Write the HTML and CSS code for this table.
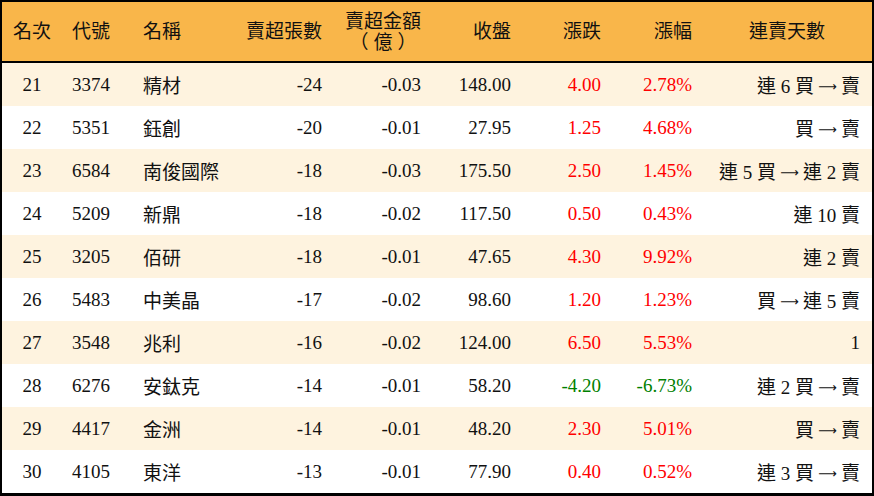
FILE: index.html
```html
<!DOCTYPE html>
<html lang="zh-Hant">
<head>
<meta charset="utf-8">
<title>賣超排行</title>
<link rel="stylesheet" href="styles.css">
</head>
<body>
<table class="rank">
  <colgroup>
    <col class="w1"><col class="w2"><col class="w3"><col class="w4"><col class="w5"><col class="w6"><col class="w7"><col class="w8"><col class="w9">
  </colgroup>
  <thead>
    <tr>
      <th class="c1">名次</th>
      <th class="c2">代號</th>
      <th class="c3">名稱</th>
      <th class="num">賣超張數</th>
      <th class="num"><span class="stack">賣超金額<br><span class="unit">（億）</span></span></th>
      <th class="num">收盤</th>
      <th class="num">漲跌</th>
      <th class="num">漲幅</th>
      <th class="c9h">連賣天數</th>
    </tr>
  </thead>
  <tbody>
    <tr class="alt"><td class="c1">21</td><td class="c2">3374</td><td class="c3">精材</td><td class="num">-24</td><td class="num">-0.03</td><td class="num">148.00</td><td class="num up">4.00</td><td class="num up">2.78%</td><td class="c9">連 6 買<span class="arrow">⟶</span>賣</td></tr>
    <tr><td class="c1">22</td><td class="c2">5351</td><td class="c3">鈺創</td><td class="num">-20</td><td class="num">-0.01</td><td class="num">27.95</td><td class="num up">1.25</td><td class="num up">4.68%</td><td class="c9">買<span class="arrow">⟶</span>賣</td></tr>
    <tr class="alt"><td class="c1">23</td><td class="c2">6584</td><td class="c3">南俊國際</td><td class="num">-18</td><td class="num">-0.03</td><td class="num">175.50</td><td class="num up">2.50</td><td class="num up">1.45%</td><td class="c9">連 5 買<span class="arrow">⟶</span>連 2 賣</td></tr>
    <tr><td class="c1">24</td><td class="c2">5209</td><td class="c3">新鼎</td><td class="num">-18</td><td class="num">-0.02</td><td class="num">117.50</td><td class="num up">0.50</td><td class="num up">0.43%</td><td class="c9">連 10 賣</td></tr>
    <tr class="alt"><td class="c1">25</td><td class="c2">3205</td><td class="c3">佰研</td><td class="num">-18</td><td class="num">-0.01</td><td class="num">47.65</td><td class="num up">4.30</td><td class="num up">9.92%</td><td class="c9">連 2 賣</td></tr>
    <tr><td class="c1">26</td><td class="c2">5483</td><td class="c3">中美晶</td><td class="num">-17</td><td class="num">-0.02</td><td class="num">98.60</td><td class="num up">1.20</td><td class="num up">1.23%</td><td class="c9">買<span class="arrow">⟶</span>連 5 賣</td></tr>
    <tr class="alt"><td class="c1">27</td><td class="c2">3548</td><td class="c3">兆利</td><td class="num">-16</td><td class="num">-0.02</td><td class="num">124.00</td><td class="num up">6.50</td><td class="num up">5.53%</td><td class="c9">1</td></tr>
    <tr><td class="c1">28</td><td class="c2">6276</td><td class="c3">安鈦克</td><td class="num">-14</td><td class="num">-0.01</td><td class="num">58.20</td><td class="num down">-4.20</td><td class="num down">-6.73%</td><td class="c9">連 2 買<span class="arrow">⟶</span>賣</td></tr>
    <tr class="alt"><td class="c1">29</td><td class="c2">4417</td><td class="c3">金洲</td><td class="num">-14</td><td class="num">-0.01</td><td class="num">48.20</td><td class="num up">2.30</td><td class="num up">5.01%</td><td class="c9">買<span class="arrow">⟶</span>賣</td></tr>
    <tr><td class="c1">30</td><td class="c2">4105</td><td class="c3">東洋</td><td class="num">-13</td><td class="num">-0.01</td><td class="num">77.90</td><td class="num up">0.40</td><td class="num up">0.52%</td><td class="c9">連 3 買<span class="arrow">⟶</span>賣</td></tr>
  </tbody>
</table>
</body>
</html>
```
FILE: styles.css
```css
html, body {
  margin: 0;
  padding: 0;
  background: #ffffff;
}

.rank {
  width: 874px;
  table-layout: fixed;
  border-collapse: separate;
  border-spacing: 0;
  border: 2px solid #000;
  border-bottom-width: 3px;
  font-family: "Liberation Serif", "Noto Sans CJK TC", serif;
  font-size: 19px;
  color: #111;
}

.w1 { width: 60px; }
.w2 { width: 71px; }
.w3 { width: 99px; }
.w4 { width: 100px; }
.w5 { width: 99px; }
.w6 { width: 90px; }
.w7 { width: 90px; }
.w8 { width: 91px; }
.w9 { width: 170px; }

.rank th {
  background: #f9b64a;
  height: 59px;
  padding: 0 10px;
  font-weight: normal;
  line-height: 21px;
  border-bottom: 2px solid #000;
  vertical-align: middle;
  white-space: nowrap;
}

.stack {
  display: inline-block;
  text-align: center;
  padding-top: 1px;
}

.unit {
  letter-spacing: 5px;
  margin-right: -5px;
}

.rank td {
  height: 43px;
  padding: 0 10px;
  vertical-align: middle;
  white-space: nowrap;
}

.rank tr.alt td {
  background: #fef3df;
}

.rank .c1 { text-align: center; padding: 0; }
.rank .c2 { text-align: left; }
.rank .c3 { text-align: left; }
.rank .num { text-align: right; }
.rank .c9 { text-align: right; padding-right: 12px; }
.rank .c9h { text-align: center; padding: 0; }

.arrow {
  display: inline-block;
  width: 27px;
  text-align: center;
  font-family: "DejaVu Sans", sans-serif;
  font-size: 13px;
  vertical-align: 2px;
}

.up { color: #ff0000; }
.down { color: #008000; }
```
